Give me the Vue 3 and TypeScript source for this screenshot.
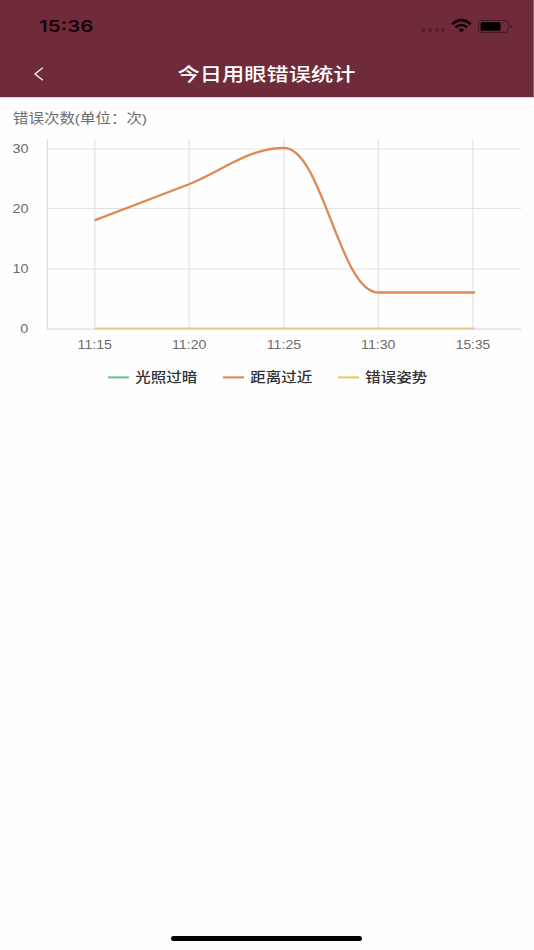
<script setup lang="ts">
interface Tick {
  label: string
  pos: number
}

interface LegendItem {
  label: string
  color: string
}

const xTicks: Tick[] = [
  { label: '11:15', pos: 94.8 },
  { label: '11:20', pos: 189.2 },
  { label: '11:25', pos: 284 },
  { label: '11:30', pos: 378.3 },
  { label: '15:35', pos: 473 },
]

const yTicks: Tick[] = [
  { label: '30', pos: 52 },
  { label: '20', pos: 111.5 },
  { label: '10', pos: 172 },
  { label: '0', pos: 232 },
]

const legend: LegendItem[] = [
  { label: '光照过暗', color: '#68bd90' },
  { label: '距离过近', color: '#dd8452' },
  { label: '错误姿势', color: '#e8c957' },
]

const distancePath =
  'M94.5 123.4 L189 87.2 C222 74 248 51 284 51 C322 51 340 195.5 378 195.5 L475 195.5'
</script>

<template>
  <main class="screen">
    <header class="top">
      <div class="status">
        <svg class="clock" width="60" height="24" viewBox="0 0 60 24">
          <text x="1" y="17.9" textLength="54.5" lengthAdjust="spacingAndGlyphs">15:36</text>
        </svg>
        <svg class="indicators" width="94" height="20" viewBox="0 0 94 20">
          <g fill="#561d2d">
            <circle v-for="n in 4" :key="n" :cx="n * 6.6 - 3.2" cy="14.2" r="2" />
          </g>
          <g fill="none" stroke="#160409">
            <path d="M32 8.2 Q41.3 0.2 50.6 8.2" stroke-width="2.7" />
            <path d="M35.3 11.4 Q41.3 6.5 47.3 11.4" stroke-width="2.4" />
          </g>
          <path d="M38.3 13.8 Q41.3 11.3 44.3 13.8 L41.3 16.4 Z" fill="#160409" />
          <rect x="58.4" y="4.4" width="30.2" height="12" rx="3.5" fill="none" stroke="#481625" />
          <rect x="60.6" y="6.2" width="20" height="8.6" rx="1.5" fill="#050102" />
          <path d="M90 8.4 Q92 8.8 92 10.3 T90 12.2 Z" fill="#481625" />
        </svg>
      </div>
      <nav class="nav">
        <svg class="back" width="12" height="16" viewBox="0 0 12 16">
          <path d="M9.8 1.8 L2 8 L9.8 14.2" fill="none" stroke="#f6e9ed" stroke-width="1.4" />
        </svg>
        <svg class="title" width="180" height="28" viewBox="0 0 180 28">
          <text x="0.5" y="21" textLength="178" lengthAdjust="spacingAndGlyphs">今日用眼错误统计</text>
        </svg>
      </nav>
    </header>

    <section class="chart">
      <svg width="534" height="258" viewBox="0 0 534 258">
        <text class="axis" x="13" y="26.4" font-size="13.5" textLength="134" lengthAdjust="spacingAndGlyphs">错误次数(单位：次)</text>
        <g stroke="#e3e3e6" stroke-width="1.2">
          <line v-for="t in yTicks.slice(0, 3)" :key="t.label" x1="47" x2="521" :y1="t.pos" :y2="t.pos" />
          <line v-for="t in xTicks" :key="t.label" :x1="t.pos" :x2="t.pos" y1="42" y2="232" />
        </g>
        <path d="M47.3 42 V232.1 H521" fill="none" stroke="#d9daea" stroke-width="1.3" />
        <line x1="94.5" x2="475" y1="231.3" y2="231.3" stroke="#e3cd8e" stroke-width="1.7" />
        <path :d="distancePath" fill="none" stroke="#dd8a57" stroke-width="2.3" />
        <text
          v-for="t in yTicks"
          :key="'y' + t.label"
          class="axis"
          :x="t.label.length === 1 ? 20.3 : 12.5"
          :y="t.pos + 4.4"
          font-size="12.3"
          :textLength="t.label.length * 8"
          lengthAdjust="spacingAndGlyphs"
        >{{ t.label }}</text>
        <text
          v-for="t in xTicks"
          :key="'x' + t.label"
          class="axis"
          :x="t.pos - 17.2"
          y="252.2"
          font-size="12"
          textLength="34.4"
          lengthAdjust="spacingAndGlyphs"
        >{{ t.label }}</text>
      </svg>
      <ul class="legend">
        <li v-for="item in legend" :key="item.label">
          <svg width="90" height="22" viewBox="0 0 90 22">
            <line x1="0" x2="21" y1="11.4" y2="11.4" :stroke="item.color" stroke-width="2" />
            <text x="27.2" y="16.3" textLength="62" lengthAdjust="spacingAndGlyphs">{{ item.label }}</text>
          </svg>
        </li>
      </ul>
    </section>

    <div class="home" />
  </main>
</template>

<style>
body {
  margin: 0;
  background: #fff;
}
</style>

<style scoped>
.screen {
  display: flex;
  flex-direction: column;
  box-sizing: border-box;
  width: 534px;
  height: 950px;
  background: #fefefe;
  font-family: 'Liberation Sans', 'Noto Sans CJK SC', sans-serif;
}
svg {
  display: block;
}
.top {
  box-sizing: border-box;
  height: 97px;
  background: #702b3a;
  border-right: 1px solid #94606b;
  box-shadow: 0 1px 0 #e6ccd3;
}
.status {
  display: flex;
  justify-content: space-between;
  align-items: center;
  height: 52px;
  padding: 0 19px 0 38px;
}
.clock text {
  font: 600 16.5px Inter, sans-serif;
  fill: #180409;
}
.nav {
  display: flex;
  align-items: center;
  height: 44px;
  padding-left: 33px;
}
.title {
  margin-left: 132px;
}
.title text {
  font: 500 18.5px 'Noto Sans CJK SC', sans-serif;
  fill: #fff;
}
.axis {
  fill: #6c6c6e;
}
.legend {
  display: flex;
  gap: 25px;
  margin: 11px 0 0 108px;
  padding: 0;
  list-style: none;
}
.legend text {
  font: 500 13.5px 'Noto Sans CJK SC', sans-serif;
  fill: #303030;
}
.home {
  width: 191px;
  height: 5px;
  margin: auto auto 9px 171px;
  border-radius: 3px;
  background: #000;
}
</style>
